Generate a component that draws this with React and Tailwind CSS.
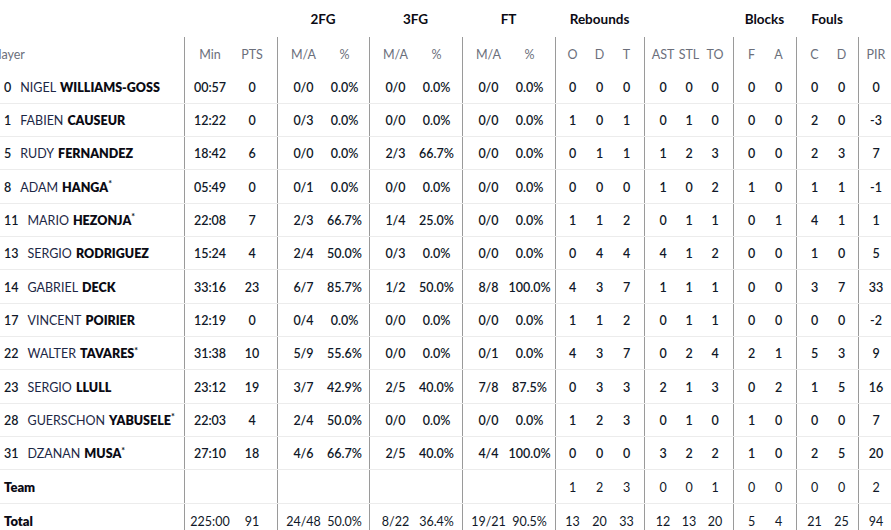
import React from 'react';

const players = [
  ['0', 'NIGEL', 'WILLIAMS-GOSS', false, '00:57', '0', ['0/0', '0.0%'], ['0/0', '0.0%'], ['0/0', '0.0%'], ['0', '0', '0'], ['0', '0', '0'], ['0', '0'], ['0', '0'], '0'],
  ['1', 'FABIEN', 'CAUSEUR', false, '12:22', '0', ['0/3', '0.0%'], ['0/0', '0.0%'], ['0/0', '0.0%'], ['1', '0', '1'], ['0', '1', '0'], ['0', '0'], ['2', '0'], '-3'],
  ['5', 'RUDY', 'FERNANDEZ', false, '18:42', '6', ['0/0', '0.0%'], ['2/3', '66.7%'], ['0/0', '0.0%'], ['0', '1', '1'], ['1', '2', '3'], ['0', '0'], ['2', '3'], '7'],
  ['8', 'ADAM', 'HANGA', true, '05:49', '0', ['0/1', '0.0%'], ['0/0', '0.0%'], ['0/0', '0.0%'], ['0', '0', '0'], ['1', '0', '2'], ['1', '0'], ['1', '1'], '-1'],
  ['11', 'MARIO', 'HEZONJA', true, '22:08', '7', ['2/3', '66.7%'], ['1/4', '25.0%'], ['0/0', '0.0%'], ['1', '1', '2'], ['0', '1', '1'], ['0', '1'], ['4', '1'], '1'],
  ['13', 'SERGIO', 'RODRIGUEZ', false, '15:24', '4', ['2/4', '50.0%'], ['0/3', '0.0%'], ['0/0', '0.0%'], ['0', '4', '4'], ['4', '1', '2'], ['0', '0'], ['1', '0'], '5'],
  ['14', 'GABRIEL', 'DECK', false, '33:16', '23', ['6/7', '85.7%'], ['1/2', '50.0%'], ['8/8', '100.0%'], ['4', '3', '7'], ['1', '1', '1'], ['0', '0'], ['3', '7'], '33'],
  ['17', 'VINCENT', 'POIRIER', false, '12:19', '0', ['0/4', '0.0%'], ['0/0', '0.0%'], ['0/0', '0.0%'], ['1', '1', '2'], ['0', '1', '1'], ['0', '0'], ['0', '0'], '-2'],
  ['22', 'WALTER', 'TAVARES', true, '31:38', '10', ['5/9', '55.6%'], ['0/0', '0.0%'], ['0/1', '0.0%'], ['4', '3', '7'], ['0', '2', '4'], ['2', '1'], ['5', '3'], '9'],
  ['23', 'SERGIO', 'LLULL', false, '23:12', '19', ['3/7', '42.9%'], ['2/5', '40.0%'], ['7/8', '87.5%'], ['0', '3', '3'], ['2', '1', '3'], ['0', '2'], ['1', '5'], '16'],
  ['28', 'GUERSCHON', 'YABUSELE', true, '22:03', '4', ['2/4', '50.0%'], ['0/0', '0.0%'], ['0/0', '0.0%'], ['1', '2', '3'], ['0', '1', '0'], ['1', '0'], ['0', '0'], '7'],
  ['31', 'DZANAN', 'MUSA', true, '27:10', '18', ['4/6', '66.7%'], ['2/5', '40.0%'], ['4/4', '100.0%'], ['0', '0', '0'], ['3', '2', '2'], ['1', '0'], ['2', '5'], '20'],
];

// each group: left padding, right padding, cell width
const Group = ({ pl, pr, w, cells }) => (
  <div className={`flex h-full border-l border-[#9a9a9a] ${pl} ${pr}`}>
    {cells.map((c, i) => (
      <div key={i} className={`${w} flex items-center justify-center pt-[3px]`}>{c}</div>
    ))}
  </div>
);

const StatCols = ({ r }) => (
  <>
    <Group pl="pl-[4px]" pr="pr-[4px]" w="w-[42px]" cells={[r.min, r.pts]} />
    <Group pl="pl-[5px]" pr="pr-[4px]" w="w-[41px]" cells={r.fg2} />
    <Group pl="pl-[5px]" pr="pr-[5px]" w="w-[41px]" cells={r.fg3} />
    <Group pl="pl-[5px]" pr="pr-[5px]" w="w-[41px]" cells={r.ft} />
    <Group pl="pl-[3px]" pr="pr-[4px]" w="w-[27px]" cells={r.reb} />
    <Group pl="pl-[5px]" pr="pr-[5px]" w="w-[26px]" cells={r.misc} />
    <Group pl="pl-[4px]" pr="pr-[4px]" w="w-[27px]" cells={r.blk} />
    <Group pl="pl-[4px]" pr="pr-[3px]" w="w-[27px]" cells={r.fouls} />
    <Group pl="pl-0" pr="pr-0" w="w-[34px]" cells={[r.pir]} />
  </>
);

const toRow = (p) => ({
  min: p[4], pts: p[5], fg2: p[6], fg3: p[7], ft: p[8], reb: p[9], misc: p[10], blk: p[11], fouls: p[12], pir: p[13],
});

export default function App() {
  const headerRow = {
    min: 'Min', pts: 'PTS', fg2: ['M/A', '%'], fg3: ['M/A', '%'], ft: ['M/A', '%'],
    reb: ['O', 'D', 'T'], misc: ['AST', 'STL', 'TO'], blk: ['F', 'A'], fouls: ['C', 'D'], pir: 'PIR',
  };
  const team = {
    min: '', pts: '', fg2: ['', ''], fg3: ['', ''], ft: ['', ''],
    reb: ['1', '2', '3'], misc: ['0', '0', '1'], blk: ['0', '0'], fouls: ['0', '0'], pir: '2',
  };
  const total = {
    min: '225:00', pts: '91', fg2: ['24/48', '50.0%'], fg3: ['8/22', '36.4%'], ft: ['19/21', '90.5%'],
    reb: ['13', '20', '33'], misc: ['12', '13', '20'], blk: ['5', '4'], fouls: ['21', '25'], pir: '94',
  };

  return (
    <div className="w-[891px] h-[530px] overflow-hidden bg-white font-['Lato','Open_Sans',sans-serif] text-[12.5px] text-[#101828]">
      <div className="w-[900px]">
        {/* group titles */}
        <div className="flex h-[37px] items-center pt-[2px] text-[13.5px] font-bold text-[#0b0b14]">
          <div className="w-[277px]" />
          <div className="w-[92px] text-center">2FG</div>
          <div className="w-[93px] text-center">3FG</div>
          <div className="w-[93px] text-center">FT</div>
          <div className="w-[89px] text-center">Rebounds</div>
          <div className="w-[89px]" />
          <div className="w-[63px] text-center">Blocks</div>
          <div className="w-[62px] text-center">Fouls</div>
        </div>

        {/* column headers */}
        <div className="flex h-[33.5px] items-stretch text-[#6b6f7b]">
          <div className="w-[184px] flex items-center pt-[3px]">
            <span className="-ml-[9px]">Player</span>
          </div>
          <StatCols r={headerRow} />
        </div>

        {players.map((p) => (
          <div key={p[0]} className="flex h-[33.33px] items-stretch border-b border-[#ececec] font-semibold">
            <div className="w-[184px] flex items-center pl-[4px] pt-[3px] whitespace-nowrap">
              <span className="mr-[9px]">{p[0]}</span>
              <span className="font-normal text-[#1c2745]">{p[1]}</span>
              <span className="ml-[4px] font-extrabold text-[#0b0b14]">{p[2]}</span>
              {p[3] && <sup className="text-[9px] font-bold -top-[4px]">*</sup>}
            </div>
            <StatCols r={toRow(p)} />
          </div>
        ))}

        <div className="flex h-[33.33px] items-stretch border-b border-[#ececec]">
          <div className="w-[184px] flex items-center pl-[4px] pt-[3px] font-extrabold text-[13px] text-[#0b0b14]">Team</div>
          <StatCols r={team} />
        </div>

        <div className="flex h-[33.33px] items-stretch">
          <div className="w-[184px] flex items-center pl-[4px] pt-[3px] font-extrabold text-[13px] text-[#0b0b14]">Total</div>
          <StatCols r={total} />
        </div>
      </div>
    </div>
  );
}
